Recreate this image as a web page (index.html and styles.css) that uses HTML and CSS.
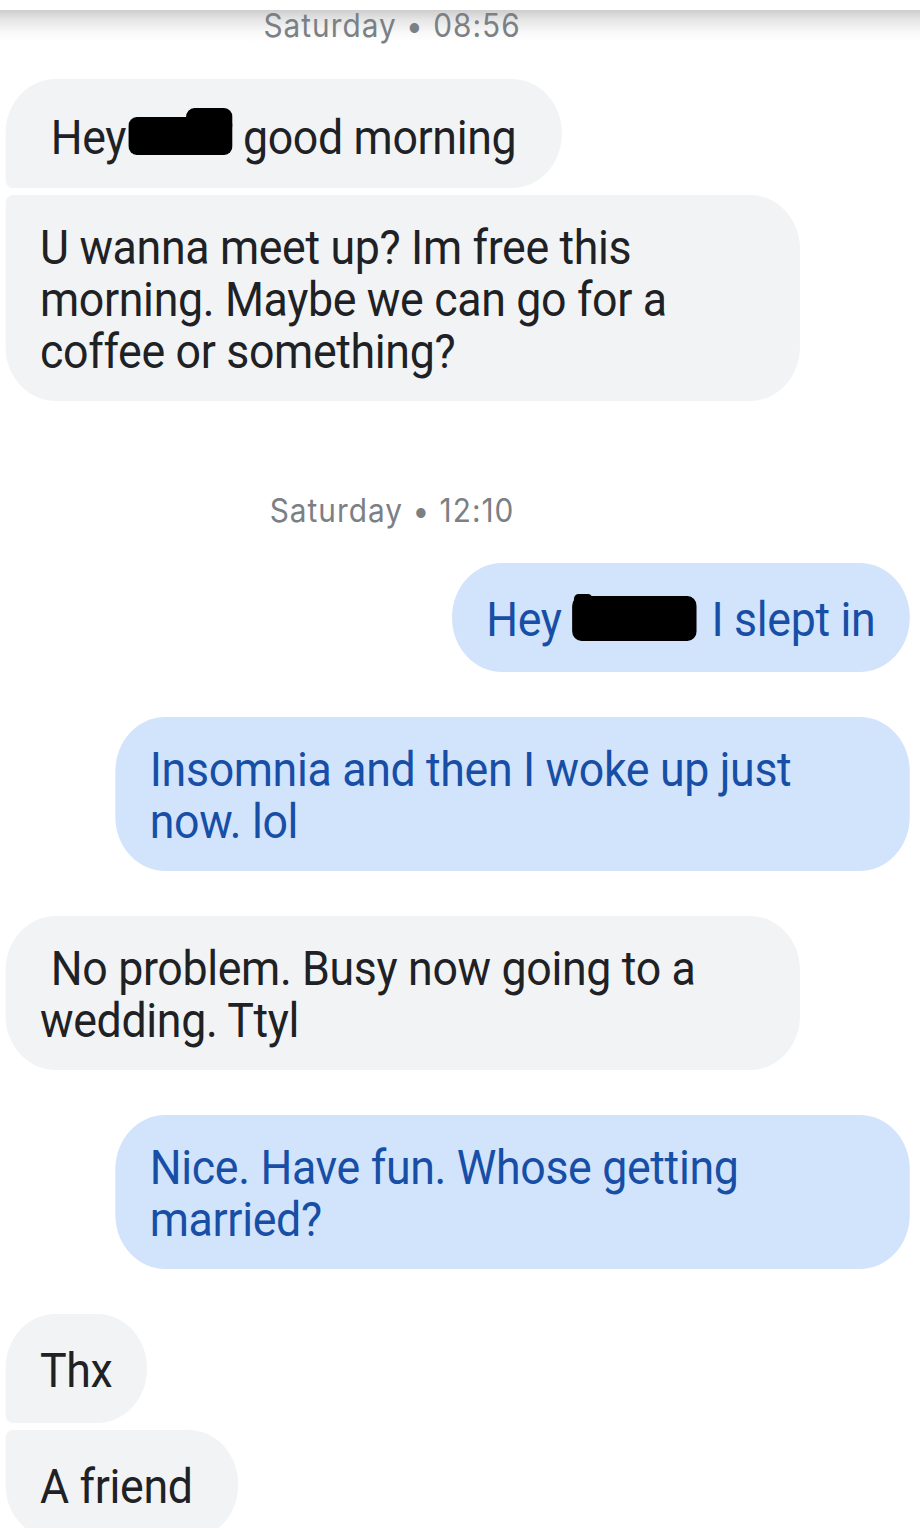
FILE: index.html
```html
<!DOCTYPE html>
<html lang="en">
<head>
<meta charset="utf-8">
<title>Messages</title>
<link rel="stylesheet" href="styles.css">
</head>
<body>
<div class="screen">
  <div class="thread">
    <div class="stamp stamp-first">Saturday • 08:56</div>

    <div class="group in first-group">
      <div class="bubble in-first"><span class="txt">&nbsp;Hey<svg class="redact redact-a" width="112" height="47" viewBox="0 0 112 47"><rect x="0" y="9" width="112" height="38" rx="9"/><rect x="62" y="0" width="50" height="26" rx="9"/></svg> good morning&nbsp;</span></div>
      <div class="bubble in-last"><span class="txt">U wanna meet up? Im free this morning. Maybe we can go for a coffee or something?</span></div>
    </div>

    <div class="stamp stamp-second">Saturday • 12:10</div>

    <div class="group out first-out">
      <div class="bubble"><span class="txt">Hey <svg class="redact redact-b" width="134" height="47" viewBox="0 0 134 47"><rect x="0" y="2" width="134" height="45" rx="10"/><rect x="2" y="0" width="20" height="12" rx="5"/></svg> I slept in</span></div>
    </div>

    <div class="group out spaced">
      <div class="bubble"><span class="txt">Insomnia and then I woke up just now. lol</span></div>
    </div>

    <div class="group in spaced">
      <div class="bubble"><span class="txt">&nbsp;No problem. Busy now going to a wedding. Ttyl</span></div>
    </div>

    <div class="group out spaced">
      <div class="bubble"><span class="txt">Nice. Have fun. Whose getting married?</span></div>
    </div>

    <div class="group in spaced">
      <div class="bubble in-first"><span class="txt">Thx</span></div>
      <div class="bubble in-last"><span class="txt">A friend&nbsp;</span></div>
    </div>
  </div>
</div>
</body>
</html>
```

FILE: styles.css
```css
html, body {
  margin: 0;
  padding: 0;
  overflow: hidden;
}

body {
  width: 920px;
  height: 1528px;
  background:
    linear-gradient(to bottom, #ffffff 0, #ffffff 10px, #cdcdcd 10px, #e6e6e6 20px, #f8f8f8 32px, #ffffff 42px) no-repeat,
    #ffffff;
  background-size: 100% 42px, auto;
  font-family: Roboto, "Noto Sans", sans-serif;
}

.screen {
  width: 989px;
  transform: scaleX(0.9302);
  transform-origin: 0 0;
}

.thread {
  display: flex;
  flex-direction: column;
  padding: 0 11px 0 6px;
}

.stamp {
  font-family: Inter, Roboto, sans-serif;
  font-size: 32px;
  line-height: 36px;
  height: 36px;
  color: #7b8085;
  text-align: center;
  padding-right: 141px;
  letter-spacing: 1.1px;
}

.stamp-first {
  margin-top: 8px;
}

.stamp-second {
  margin-top: 92px;
}

.group {
  display: flex;
  flex-direction: column;
  gap: 8px;
}

.group.in {
  align-items: flex-start;
}

.group.out {
  align-items: flex-end;
}

.first-group {
  margin-top: 35px;
}

.first-out {
  margin-top: 34px;
}

.spaced {
  margin-top: 45px;
}

.group.in .bubble + .bubble {
  margin-top: -1px;
}

.bubble {
  box-sizing: border-box;
  max-width: 854px;
  min-height: 109px;
  display: flex;
  align-items: center;
  padding: 27px 37px 23px;
  font-size: 48px;
  line-height: 52px;
  letter-spacing: -0.35px;
  border-radius: 54px;
}

.txt {
  display: block;
}

.group.in .bubble {
  background: #f1f3f4;
  color: #202124;
}

.group.out .bubble {
  background: #d2e3fc;
  color: #174ea6;
}

.bubble.in-first {
  border-bottom-left-radius: 8px;
}

.bubble.in-last {
  border-top-left-radius: 8px;
}

.redact {
  fill: #000000;
}

.redact-a {
  vertical-align: -1px;
  margin-left: 2px;
}

.redact-b {
  vertical-align: -5px;
  margin-right: 4px;
}
```
